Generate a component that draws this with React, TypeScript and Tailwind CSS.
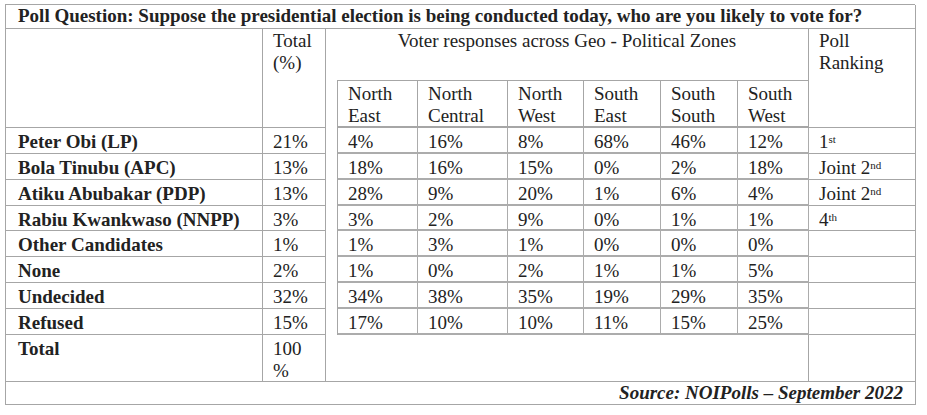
import React from 'react';

const zones = ['North East', 'North Central', 'North West', 'South East', 'South South', 'South West'];

const rows: { name: string; total: string; zones: string[]; rank?: React.ReactNode }[] = [
  { name: 'Peter Obi (LP)', total: '21%', zones: ['4%', '16%', '8%', '68%', '46%', '12%'], rank: <>1<sup className="text-[11px]">st</sup></> },
  { name: 'Bola Tinubu (APC)', total: '13%', zones: ['18%', '16%', '15%', '0%', '2%', '18%'], rank: <>Joint 2<sup className="text-[11px]">nd</sup></> },
  { name: 'Atiku Abubakar (PDP)', total: '13%', zones: ['28%', '9%', '20%', '1%', '6%', '4%'], rank: <>Joint 2<sup className="text-[11px]">nd</sup></> },
  { name: 'Rabiu Kwankwaso (NNPP)', total: '3%', zones: ['3%', '2%', '9%', '0%', '1%', '1%'], rank: <>4<sup className="text-[11px]">th</sup></> },
  { name: 'Other Candidates', total: '1%', zones: ['1%', '3%', '1%', '0%', '0%', '0%'] },
  { name: 'None', total: '2%', zones: ['1%', '0%', '2%', '1%', '1%', '5%'] },
  { name: 'Undecided', total: '32%', zones: ['34%', '38%', '35%', '19%', '29%', '35%'] },
  { name: 'Refused', total: '15%', zones: ['17%', '10%', '10%', '11%', '15%', '25%'] },
];

const cell = 'border-r border-b border-[#a6a6a6]';

export default function App() {
  return (
    <div className="min-h-[415px] bg-white pl-[5px] pt-[4px] text-[#222] font-['Liberation_Serif',serif] text-[19px] leading-[22px]">
      <div className="grid w-[910px] grid-cols-[257px_63px_12px_80px_90px_76px_77px_77px_71px_107px] grid-rows-[24px_51px_48px_26px_26px_26px_25px_26px_26px_26px_26px_47px_23px] border-l border-t border-[#a6a6a6]">
        {/* title */}
        <div className={`${cell} col-span-10 pl-[12px] font-bold whitespace-nowrap`}>
          Poll Question: Suppose the presidential election is being conducted today, who are you likely to vote for?
        </div>

        {/* header */}
        <div className={`${cell} row-span-2`} />
        <div className={`${cell} row-span-2 pl-[10px] pt-[1px]`}>
          Total
          <br />
          (%)
        </div>
        <div className="col-span-7 border-r border-[#a6a6a6] pt-[1px] text-center">
          Voter responses across Geo - Political Zones
        </div>
        <div className={`${cell} row-span-2 pl-[10px] pt-[1px]`}>
          Poll
          <br />
          Ranking
        </div>
        <div className="row-span-9 border-r border-[#a6a6a6]" />
        {zones.map((z) => {
          const [a, b] = z.split(' ');
          return (
            <div key={z} className="border-t border-r border-b-2 border-[#a6a6a6] pl-[10px] pt-[2px]">
              {a}
              <br />
              {b}
            </div>
          );
        })}

        {/* data */}
        {rows.map((r) => (
          <React.Fragment key={r.name}>
            <div className={`${cell} pl-[12px] pt-[3px] font-bold whitespace-nowrap`}>{r.name}</div>
            <div className={`${cell} pl-[10px] pt-[3px]`}>{r.total}</div>
            {r.zones.map((v, i) => (
              <div key={i} className="border-r border-b-2 border-[#acacac] pl-[10px] pt-[3px]">
                {v}
              </div>
            ))}
            <div className={`${cell} pl-[10px] pt-[3px] whitespace-nowrap`}>{r.rank}</div>
          </React.Fragment>
        ))}

        {/* total */}
        <div className={`${cell} pl-[12px] pt-[3px] font-bold`}>Total</div>
        <div className={`${cell} pl-[10px] pt-[3px]`}>
          100
          <br />%
        </div>
        <div className={`${cell} col-span-7`} />
        <div className={cell} />

        {/* source */}
        <div className={`${cell} col-span-10 pr-[12px] text-right font-bold italic`}>
          Source: NOIPolls – September 2022
        </div>
      </div>
    </div>
  );
}
